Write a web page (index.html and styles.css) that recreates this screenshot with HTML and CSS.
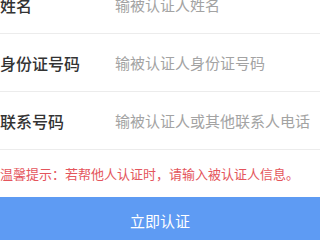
FILE: index.html
```html
<!DOCTYPE html>
<html lang="zh-CN">
<head>
<meta charset="utf-8">
<link rel="stylesheet" href="styles.css">
</head>
<body>
<div class="page">
  <div class="form">
    <div class="row">
      <span class="label">姓名</span>
      <span class="placeholder">输被认证人姓名</span>
    </div>
    <div class="row">
      <span class="label">身份证号码</span>
      <span class="placeholder">输被认证人身份证号码</span>
    </div>
    <div class="row">
      <span class="label">联系号码</span>
      <span class="placeholder">输被认证人或其他联系人电话</span>
    </div>
  </div>
  <div class="hint">温馨提示：若帮他人认证时，请输入被认证人信息。</div>
  <div class="button">立即认证</div>
</div>
</body>
</html>
```
FILE: styles.css
```css
html, body {
  margin: 0;
  padding: 0;
  background: #ffffff;
  overflow: hidden;
}
body {
  width: 320px;
  height: 240px;
  font-family: "Noto Sans CJK SC", "Noto Sans", sans-serif;
}
.page {
  display: flex;
  flex-direction: column;
  margin-top: -24px;
}
.form {
  display: flex;
  flex-direction: column;
}
.row {
  display: flex;
  align-items: center;
  height: 57px;
  border-bottom: 1px solid #ececec;
}
.label {
  width: 115px;
  flex-shrink: 0;
  font-size: 16px;
  font-weight: 500;
  color: #333333;
}
.placeholder {
  font-size: 15px;
  color: #a3a3a3;
  white-space: nowrap;
}
.hint {
  height: 47px;
  display: flex;
  align-items: center;
  font-size: 13px;
  color: #e4555c;
  white-space: nowrap;
}
.button {
  height: 46px;
  display: flex;
  align-items: center;
  justify-content: center;
  background: #5e9bf3;
  color: #ffffff;
  font-size: 15px;
}
```
